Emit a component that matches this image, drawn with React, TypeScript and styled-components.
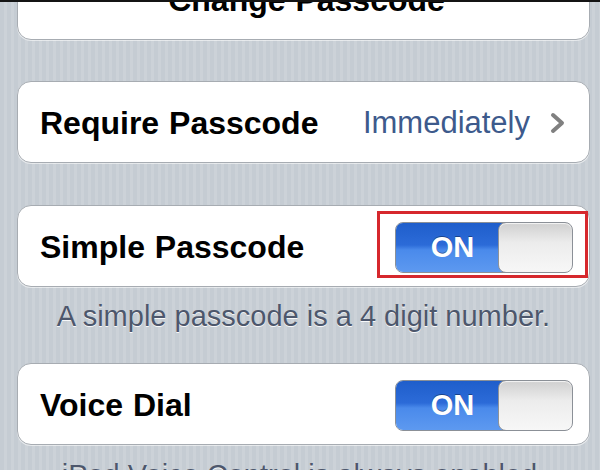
import React from "react";
import styled, { createGlobalStyle } from "styled-components";

const GlobalStyle = createGlobalStyle`
  html, body { margin: 0; padding: 0; }
  body {
    font-family: "Liberation Sans", Arial, Helvetica, sans-serif;
    background: #c6cdd4;
  }
`;

const Screen = styled.div`
  width: 600px;
  height: 470px;
  box-sizing: border-box;
  overflow: hidden;
  border-top: 2px solid #141414;
  background-color: #c6cdd4;
  background-image: repeating-linear-gradient(
    90deg,
    #c5ccd3 0px,
    #c5ccd3 4px,
    #ccd2d8 4px,
    #ccd2d8 7px
  );
`;

const List = styled.div`
  display: flex;
  flex-direction: column;
  padding: 0 10px 0 17px;
  margin-top: -44px;
`;

const Group = styled.div<{ $gap?: number }>`
  position: relative;
  margin-top: ${(p) => p.$gap ?? 0}px;
  background: #ffffff;
  border: 1px solid #a7acb2;
  border-radius: 14px;
  box-shadow: 0 1px 0 rgba(255, 255, 255, 0.55);
`;

const Row = styled.div<{ $center?: boolean }>`
  height: 80px;
  display: flex;
  align-items: center;
  justify-content: ${(p) => (p.$center ? "center" : "flex-start")};
  padding: 2px 16px 0 22px;
  box-sizing: border-box;
`;

const Label = styled.span`
  font-size: 32px;
  font-weight: bold;
  color: #000;
  word-spacing: 1px;
`;

const Value = styled.span`
  margin-left: auto;
  font-size: 31px;
  color: #3d5a8c;
`;

const Chevron = styled.svg`
  width: 16px;
  height: 22px;
  margin-left: 20px;
  margin-right: 7px;
`;

const Track = styled.div`
  margin-left: auto;
  width: 178px;
  height: 51px;
  box-sizing: border-box;
  display: flex;
  border-radius: 8px;
  border: 1px solid #8b9097;
  overflow: hidden;
  background: linear-gradient(#dcdcdc, #f4f4f4);
`;

const OnPart = styled.div`
  flex: 1;
  display: flex;
  align-items: center;
  justify-content: center;
  padding-left: 3px;
  background: linear-gradient(#1f5ecb 0%, #2c6bd8 45%, #4a8aeb 55%, #5d99f0 100%);
  color: #fff;
  font-size: 29px;
  font-weight: bold;
  text-shadow: 0 -1px 0 rgba(0, 0, 0, 0.35);
`;

const Knob = styled.div`
  width: 75px;
  box-sizing: border-box;
  margin: -1px -1px -1px -8px;
  border: 1px solid #8f9399;
  border-radius: 8px;
  background: linear-gradient(#cfcfcf 0%, #ececec 40%, #f7f7f7 100%);
  box-shadow: inset 0 1px 1px rgba(255, 255, 255, 0.8);
`;

const Highlight = styled.div`
  position: absolute;
  left: 359px;
  top: 5px;
  width: 211px;
  height: 67px;
  box-sizing: border-box;
  border: 3px solid #d6282d;
  pointer-events: none;
`;

const Caption = styled.div<{ $top: number; $bottom: number }>`
  margin: ${(p) => p.$top}px 0 ${(p) => p.$bottom}px;
  text-align: center;
  font-size: 29px;
  line-height: 33px;
  color: #4d576c;
  text-shadow: 0 1px 0 rgba(255, 255, 255, 0.9);
`;

function Switch() {
  return (
    <Track>
      <OnPart>ON</OnPart>
      <Knob />
    </Track>
  );
}

export default function App() {
  return (
    <>
      <GlobalStyle />
      <Screen>
        <List>
          <Group>
            <Row $center>
              <Label>Change Passcode</Label>
            </Row>
          </Group>
          <Group $gap={41}>
            <Row>
              <Label>Require Passcode</Label>
              <Value>Immediately</Value>
              <Chevron viewBox="0 0 16 22">
                <path
                  d="M3 3 L12 11 L3 19"
                  fill="none"
                  stroke="#808080"
                  strokeWidth="4"
                  strokeLinecap="round"
                  strokeLinejoin="round"
                />
              </Chevron>
            </Row>
          </Group>
          <Group $gap={42}>
            <Row>
              <Label>Simple Passcode</Label>
              <Switch />
            </Row>
            <Highlight />
          </Group>
          <Caption $top={13} $bottom={30}>
            A simple passcode is a 4 digit number.
          </Caption>
          <Group>
            <Row>
              <Label>Voice Dial</Label>
              <Switch />
            </Row>
          </Group>
          <Caption $top={14} $bottom={0}>
            iPod Voice Control is always enabled.
          </Caption>
        </List>
      </Screen>
    </>
  );
}
